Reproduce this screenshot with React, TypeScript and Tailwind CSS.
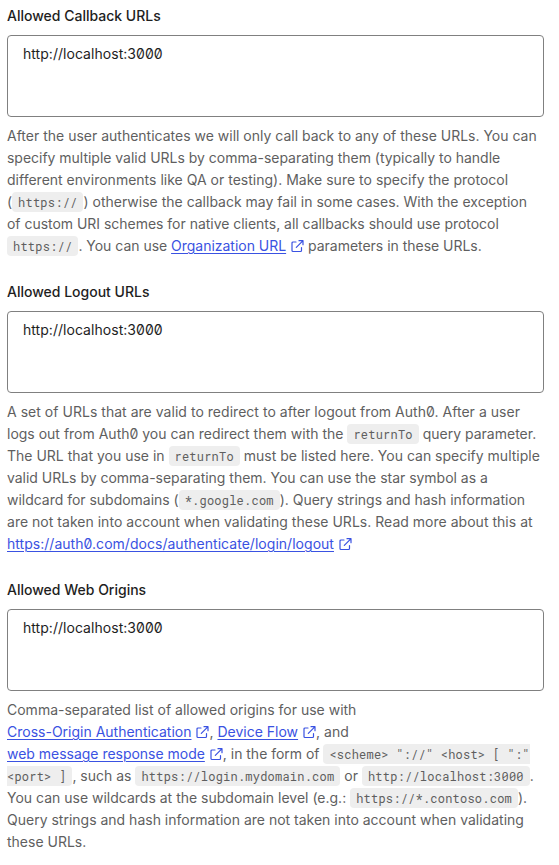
import type { ReactNode } from 'react';

function Code({ children, shape = 'rounded-[4px] px-[6px]' }: { children: ReactNode; shape?: string }) {
  return (
    <code className={`inline-block h-[20px] bg-[#eeeeee] align-baseline font-['Roboto_Mono','DejaVu_Sans_Mono','Liberation_Mono',monospace] text-[12px] leading-[20px] tracking-[0.22px] text-[#5f5f5f] ${shape}`}>
      {children}
    </code>
  );
}

function ExternalLink({ children }: { children: ReactNode }) {
  return (
    <a className="text-[#3a52e2]">
      <span className="underline decoration-1 underline-offset-2">{children}</span>
      <svg className="ml-[5px] inline-block h-[14px] w-[13px] align-[-2px]" viewBox="0 0 13 14" fill="none" stroke="currentColor" strokeWidth="1.2" strokeLinecap="round" strokeLinejoin="round">
        <path d="M5 3H2a1 1 0 0 0-1 1v7.500a1 1 0 0 0 1 1h7.500a1 1 0 0 0 1-1V8.500M8 1.700h4v4M11.800 1.900 5.300 8.400" />
      </svg>
    </a>
  );
}

function Field({ label, children }: { label: string; children: ReactNode }) {
  return (
    <section>
      <label className="block text-[14px] leading-[22px] font-medium text-[#1e1e1e]">{label}</label>
      <div className="mt-[8px] h-[82px] w-[537px] rounded-[4px] border border-[#808080] px-[15px] py-[7px] text-[14px] leading-[22px] tracking-[0.04px] text-[#1e1e1e]">http://localhost:3000</div>
      <div className="mt-[8px] text-[14px] leading-[22px] whitespace-nowrap text-[#5f5f5f]">{children}</div>
    </section>
  );
}

const Line = ({ children, tracking = '' }: { children: ReactNode; tracking?: string }) => (
  <div className={`h-[22px] ${tracking}`}>{children}</div>
);

export default function App() {
  return (
    <main className="flex h-[865px] w-[559px] flex-col gap-[24px] overflow-hidden bg-white px-[7px] pt-[5px] font-['Inter',sans-serif] [font-feature-settings:'zero']">
      <Field label="Allowed Callback URLs">
        <Line>After the user authenticates we will only call back to any of these URLs. You can</Line>
        <Line tracking="tracking-[-0.02px]">specify multiple valid URLs by comma-separating them (typically to handle</Line>
        <Line tracking="tracking-[0.01px]">different environments like QA or testing). Make sure to specify the protocol</Line>
        <Line>(<Code>https://</Code>) otherwise the callback may fail in some cases. With the exception</Line>
        <Line tracking="tracking-[-0.025px]">of custom URI schemes for native clients, all callbacks should use protocol</Line>
        <Line tracking="tracking-[-0.02px]"><Code>https://</Code>. You can use <ExternalLink>Organization URL</ExternalLink> parameters in these URLs.</Line>
      </Field>
      <Field label="Allowed Logout URLs">
        <Line tracking="tracking-[0.03px]">A set of URLs that are valid to redirect to after logout from Auth0. After a user</Line>
        <Line>logs out from Auth0 you can redirect them with the <Code>returnTo</Code> query parameter.</Line>
        <Line>The URL that you use in <Code>returnTo</Code> must be listed here. You can specify multiple</Line>
        <Line tracking="tracking-[-0.02px]">valid URLs by comma-separating them. You can use the star symbol as a</Line>
        <Line tracking="tracking-[-0.02px]">wildcard for subdomains (<Code>*.google.com</Code>). Query strings and hash information</Line>
        <Line tracking="tracking-[0.02px]">are not taken into account when validating these URLs. Read more about this at</Line>
        <Line tracking="tracking-[0.03px]"><ExternalLink>https://auth0.com/docs/authenticate/login/logout</ExternalLink></Line>
      </Field>
      <Field label="Allowed Web Origins">
        <Line>Comma-separated list of allowed origins for use with</Line>
        <Line><ExternalLink>Cross-Origin Authentication</ExternalLink>, <ExternalLink>Device Flow</ExternalLink>, and</Line>
        <Line tracking="tracking-[-0.02px]"><ExternalLink>web message response mode</ExternalLink>, in the form of <Code shape="rounded-l-[4px] pl-[6px]">{'<scheme> "://" <host> [ ":"'}</Code></Line>
        <Line><Code shape="rounded-r-[4px] pr-[6px]">{'<port> ]'}</Code>, such as <Code>https://login.mydomain.com</Code> or <Code>http://localhost:3000</Code>.</Line>
        <Line>You can use wildcards at the subdomain level (e.g.: <Code>https://*.contoso.com</Code>).</Line>
        <Line>Query strings and hash information are not taken into account when validating</Line>
        <Line>these URLs.</Line>
      </Field>
    </main>
  );
}
